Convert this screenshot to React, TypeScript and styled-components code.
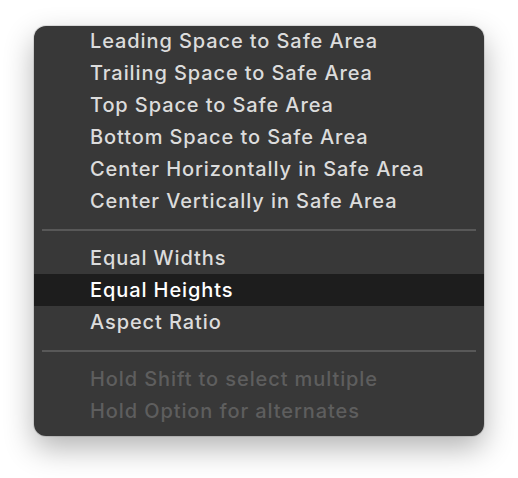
import React from "react";
import styled, { createGlobalStyle } from "styled-components";

const Global = createGlobalStyle`
  html, body { margin: 0; padding: 0; background: #ffffff; }
  body { font-family: "Inter", "Noto Sans", sans-serif; -webkit-font-smoothing: antialiased; }
`;

const Page = styled.div`
  width: 518px;
  height: 478px;
  padding: 26px 0 0 34px;
  box-sizing: border-box;
`;

const Menu = styled.div`
  width: 450px;
  height: 410px;
  box-sizing: border-box;
  background: #383838;
  border-radius: 12px;
  overflow: hidden;
  box-shadow: 0 12px 30px rgba(0, 0, 0, 0.3), 0 0 0 1px rgba(0, 0, 0, 0.1);
  display: flex;
  flex-direction: column;
  padding: 0 0 11px;
`;

const List = styled.div`
  display: flex;
  flex-direction: column;
  margin-top: -1px;
`;

const Item = styled.div<{ $active?: boolean; $disabled?: boolean }>`
  height: 32px;
  display: flex;
  align-items: center;
  padding-left: 56px;
  font-size: 20px;
  font-weight: 500;
  letter-spacing: 0.9px;
  color: ${(p) => (p.$disabled ? "#5e5e5e" : p.$active ? "#ffffff" : "#dcdcdc")};
  background: ${(p) => (p.$active ? "#1d1d1d" : "transparent")};
  white-space: nowrap;
`;

const Separator = styled.div`
  height: 2px;
  background: #585858;
  margin: 12px 8px 11px;
`;

const groups: { label: string; active?: boolean; disabled?: boolean }[][] = [
  [
    { label: "Leading Space to Safe Area" },
    { label: "Trailing Space to Safe Area" },
    { label: "Top Space to Safe Area" },
    { label: "Bottom Space to Safe Area" },
    { label: "Center Horizontally in Safe Area" },
    { label: "Center Vertically in Safe Area" },
  ],
  [
    { label: "Equal Widths" },
    { label: "Equal Heights", active: true },
    { label: "Aspect Ratio" },
  ],
  [
    { label: "Hold Shift to select multiple", disabled: true },
    { label: "Hold Option for alternates", disabled: true },
  ],
];

export default function App() {
  return (
    <Page>
      <Global />
      <Menu>
        <List>
          {groups.map((g, gi) => (
            <React.Fragment key={gi}>
              {gi > 0 && <Separator />}
              {g.map((it) => (
                <Item key={it.label} $active={it.active} $disabled={it.disabled}>
                  {it.label}
                </Item>
              ))}
            </React.Fragment>
          ))}
        </List>
      </Menu>
    </Page>
  );
}
